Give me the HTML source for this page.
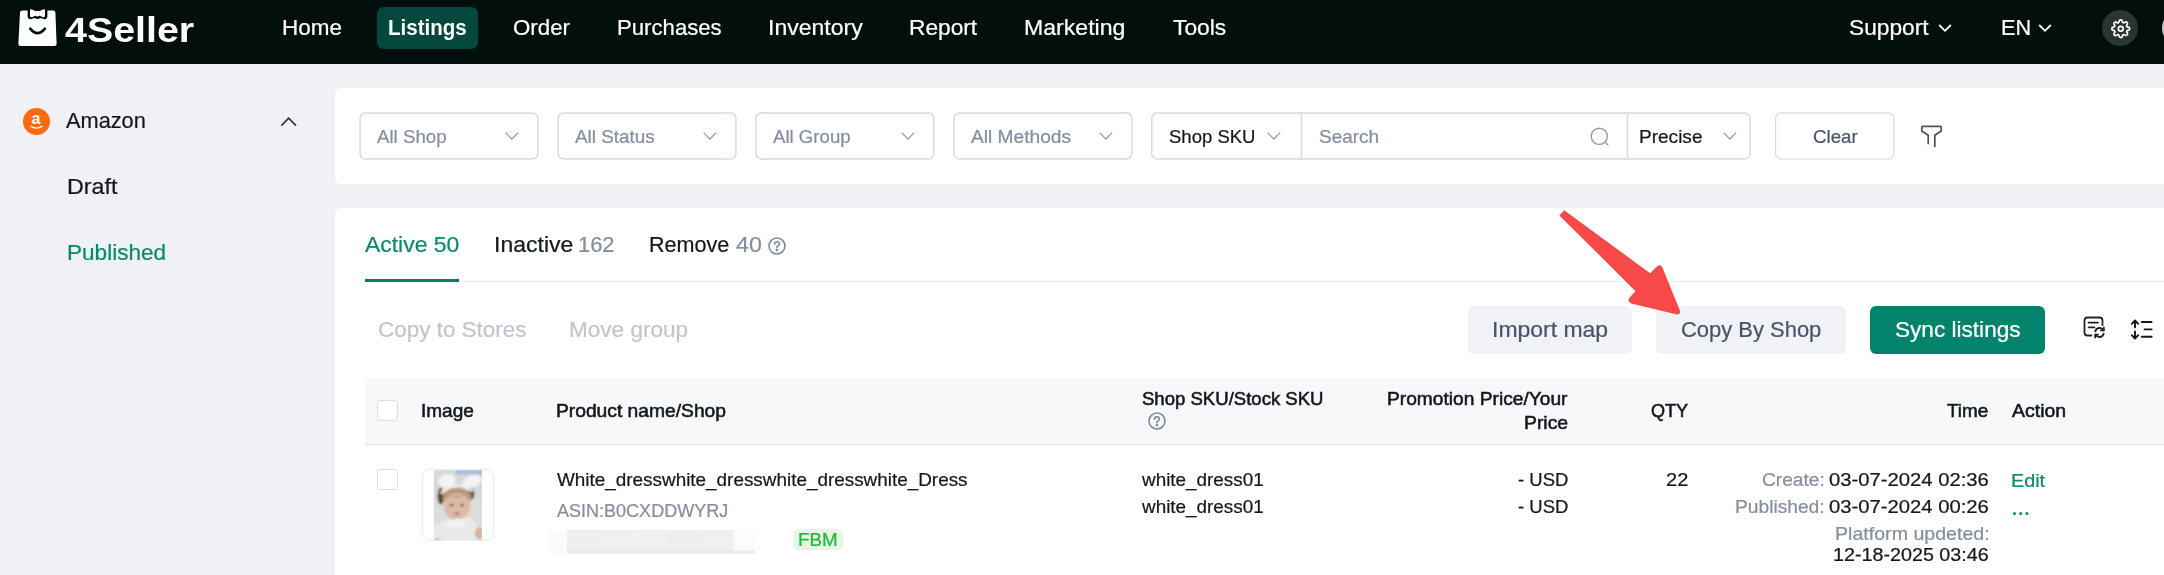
<!DOCTYPE html>
<html><head><meta charset="utf-8">
<style>
*{box-sizing:border-box;margin:0;padding:0}
html,body{width:2164px;height:575px;overflow:hidden;background:#f0f1f5;font-family:"Liberation Sans",sans-serif;}
.a{position:absolute;white-space:nowrap;line-height:1}
#hdr{position:absolute;left:0;top:0;width:2164px;height:64px;background:#020f0c}
.sel{position:absolute;top:112.2px;height:47.5px;border:1.7px solid #d6dae4;border-radius:6px;background:#fff}
.cb{position:absolute;width:20.5px;height:20.5px;border:1.5px solid #dcdfe6;border-radius:3px;background:#fff}
svg{position:absolute;overflow:visible}
</style></head><body>
<div id="w" style="position:absolute;left:0;top:0;width:2164px;height:575px;overflow:hidden">
<div id="hdr"></div>
<!-- logo -->
<svg style="left:18px;top:8px" width="40" height="40" viewBox="0 0 40 40">
<path d="M4.2 2.6 L35.2 2.6 Q37.3 2.6 37.4 4.6 L38.6 35.4 Q38.7 37.9 36.2 37.9 L2.8 37.9 Q0.3 37.9 0.4 35.4 L2 4.6 Q2.1 2.6 4.2 2.6 Z" fill="#fff"/>
<path d="M9.6 0 L29.4 0 L29.4 8.6 Q29.2 11.6 26.4 11.2 L22.4 10 Q19.5 12.2 16.6 10 L12.6 11.2 Q9.8 11.6 9.6 8.6 Z" fill="#020f0c"/>
<path d="M12 2.6 Q12 0.8 13.8 1.4 L18.2 3.2 Q19.5 2.4 20.8 3.2 L25.2 1.4 Q27 0.8 27 2.6 L27 7.6 Q27 9.6 25.2 9.2 L21.4 7.8 Q19.5 9.4 17.6 7.8 L13.8 9.2 Q12 9.6 12 7.6 Z" fill="#fff"/>
<path d="M12.2 20.7 Q19.5 29.6 26.9 20.7" fill="none" stroke="#020f0c" stroke-width="2.7" stroke-linecap="round"/>
</svg>
<div class="a" style="left:64.8px;top:12.2px;font-size:35px;font-weight:bold;color:#fff;transform:scaleX(1.125);transform-origin:0 0">4Seller</div>
<!-- nav pill -->
<div class="a" style="left:377px;top:7px;width:101px;height:42px;background:#04473c;border-radius:7px"></div>
<svg style="left:1938px;top:22px" width="14" height="12" viewBox="0 0 14 12"><path d="M1.2 3 L7 8.8 L12.8 3" fill="none" stroke="#fff" stroke-width="1.8"/></svg>
<svg style="left:2038px;top:22px" width="14" height="12" viewBox="0 0 14 12"><path d="M1.2 3 L7 8.8 L12.8 3" fill="none" stroke="#fff" stroke-width="1.8"/></svg>
<div class="a" style="left:2102px;top:10px;width:36px;height:36px;border-radius:50%;background:#2a3533"></div>
<div class="a" style="left:2161.8px;top:10px;width:36px;height:36px;border-radius:50%;background:#c9cccb"></div>
<svg style="left:2110.5px;top:18.5px" width="19.5" height="19.5" viewBox="0 0 24 24" fill="none" stroke="#fff" stroke-width="2.1" stroke-linejoin="round"><circle cx="12" cy="12" r="3"/><path d="M19.4 15a1.65 1.65 0 0 0 .33 1.82l.06.06a2 2 0 1 1-2.83 2.83l-.06-.06a1.65 1.65 0 0 0-1.82-.33 1.65 1.65 0 0 0-1 1.51V21a2 2 0 1 1-4 0v-.09A1.65 1.65 0 0 0 9 19.4a1.65 1.65 0 0 0-1.82.33l-.06.06a2 2 0 1 1-2.83-2.83l.06-.06a1.65 1.65 0 0 0 .33-1.82 1.65 1.65 0 0 0-1.51-1H3a2 2 0 1 1 0-4h.09A1.65 1.65 0 0 0 4.6 9a1.65 1.65 0 0 0-.33-1.82l-.06-.06a2 2 0 1 1 2.83-2.83l.06.06a1.65 1.65 0 0 0 1.82.33H9a1.65 1.65 0 0 0 1-1.51V3a2 2 0 1 1 4 0v.09a1.65 1.65 0 0 0 1 1.51 1.65 1.65 0 0 0 1.82-.33l.06-.06a2 2 0 1 1 2.83 2.83l-.06.06a1.65 1.65 0 0 0-.33 1.82V9a1.65 1.65 0 0 0 1.51 1H21a2 2 0 1 1 0 4h-.09a1.65 1.65 0 0 0-1.51 1z"/></svg>

<!-- sidebar -->
<div class="a" style="left:23px;top:108px;width:27px;height:27px;border-radius:50%;background:#ff6a0d"></div>
<div class="a" style="left:31.5px;top:110.5px;font-size:16px;font-weight:bold;color:#fff">a</div>
<svg style="left:29px;top:125px" width="15" height="6" viewBox="0 0 15 6"><path d="M1.5 1.2 Q7.5 5 13.5 1.2" fill="none" stroke="#fff" stroke-width="1.4"/></svg>
<svg style="left:280px;top:115px" width="18" height="14" viewBox="0 0 18 14"><path d="M1.3 10.6 L8.7 3.2 L16.1 10.6" fill="none" stroke="#2b3037" stroke-width="1.55"/></svg>

<!-- filter panel -->
<div class="a" style="left:335px;top:87.6px;width:1840px;height:96px;background:#fff;border-radius:6px"></div>
<svg style="left:0;top:0" width="2164" height="200" viewBox="0 0 2164 200" fill="#fff" stroke="#d7dae3" stroke-width="1.5"><rect x="360.05" y="113" width="177.90" height="45.9" rx="5.5"/><rect x="558.05" y="113" width="177.90" height="45.9" rx="5.5"/><rect x="755.95" y="113" width="177.90" height="45.9" rx="5.5"/><rect x="953.95" y="113" width="177.90" height="45.9" rx="5.5"/><rect x="1151.75" y="113" width="598.30" height="45.9" rx="5.5"/><path d="M1301.4 113 V159 M1627.4 113 V159" fill="none"/><rect x="1775.6" y="112.9" width="118.4" height="46.1" rx="5.5" stroke-width="1.2" stroke="#d6dae3"/></svg>
<svg style="left:505.2px;top:131.5px" width="14" height="8" viewBox="0 0 14 8"><path d="M0.6 0.6 L6.9 7 L13.2 0.6" fill="none" stroke="#959cab" stroke-width="1.25"/></svg>
<svg style="left:703.2px;top:131.5px" width="14" height="8" viewBox="0 0 14 8"><path d="M0.6 0.6 L6.9 7 L13.2 0.6" fill="none" stroke="#959cab" stroke-width="1.25"/></svg>
<svg style="left:901.1px;top:131.5px" width="14" height="8" viewBox="0 0 14 8"><path d="M0.6 0.6 L6.9 7 L13.2 0.6" fill="none" stroke="#959cab" stroke-width="1.25"/></svg>
<svg style="left:1099.1px;top:131.5px" width="14" height="8" viewBox="0 0 14 8"><path d="M0.6 0.6 L6.9 7 L13.2 0.6" fill="none" stroke="#959cab" stroke-width="1.25"/></svg>
<svg style="left:1267.2px;top:131.5px" width="14" height="8" viewBox="0 0 14 8"><path d="M0.6 0.6 L6.9 7 L13.2 0.6" fill="none" stroke="#959cab" stroke-width="1.25"/></svg>
<svg style="left:1723.2px;top:131.5px" width="14" height="8" viewBox="0 0 14 8"><path d="M0.6 0.6 L6.9 7 L13.2 0.6" fill="none" stroke="#959cab" stroke-width="1.25"/></svg>

<svg style="left:1589.5px;top:126.5px" width="20" height="20" viewBox="0 0 20 20" fill="none" stroke="#9399a6" stroke-width="1.35"><circle cx="9.3" cy="9.3" r="8.1"/><path d="M15.3 15.3 L17.9 17.9" stroke-linecap="round"/></svg>
<svg style="left:1919.5px;top:125px" width="23" height="23" viewBox="0 0 23 23" fill="none" stroke="#465063" stroke-width="1.7" stroke-linejoin="round" stroke-linecap="round"><path d="M8.2 18.4 V10.2 L1.8 6 V2.3 Q1.8 1.3 2.8 1.3 H20.2 Q21.2 1.3 21.2 2.3 V6 L14.8 10.2 V21.4"/></svg>

<!-- main panel -->
<div class="a" style="left:335px;top:207.6px;width:1840px;height:400px;background:#fff;border-radius:6px"></div>
<div class="a" style="left:365px;top:281px;width:1800px;height:1px;background:#ebecf3"></div>
<div class="a" style="left:365.2px;top:279px;width:93.8px;height:3px;background:#037f66"></div>
<svg style="left:768.2px;top:236.6px" width="18" height="18" viewBox="0 0 18 18" fill="none" stroke="#7f899b" stroke-width="1.6"><circle cx="9" cy="9" r="8"/><path d="M6.6 7.2 Q6.6 4.8 9 4.8 Q11.4 4.8 11.4 7 Q11.4 8.4 9 9.6 V10.8" stroke-linecap="round"/><circle cx="9" cy="13.1" r="0.55" fill="#7f899b"/></svg>
<div class="a" style="left:1467.8px;top:306px;width:164.2px;height:47.8px;background:#f1f2f5;border-radius:6px"></div>
<div class="a" style="left:1655.8px;top:306px;width:190px;height:47.8px;background:#f1f2f5;border-radius:6px"></div>
<div class="a" style="left:1869.9px;top:306px;width:175px;height:47.8px;background:#04836c;border-radius:6px"></div>
<!-- toolbar icons -->
<svg style="left:2082.6px;top:316.4px" width="23" height="23" viewBox="0 0 23 23" fill="none" stroke="#1f2329" stroke-width="1.8" stroke-linecap="round" stroke-linejoin="round"><path d="M8.4 19.5 H4.5 Q1.5 19.5 1.5 16.5 V4.5 Q1.5 1.5 4.5 1.5 H16.5 Q19.5 1.5 19.5 4.5 V9"/><path d="M5.6 6.6 H15 M5.6 11.4 H11.4"/><path d="M12.3 15.3 A4.4 4.4 0 0 1 20.4 14.2 M20.7 17.6 A4.4 4.4 0 0 1 12.6 18.8" stroke-width="1.9"/><path d="M20.9 11.4 V14.5 H17.9 M12.1 21.6 V18.5 H15.1" stroke-width="1.7"/></svg>
<svg style="left:2130px;top:319px" width="23" height="21" viewBox="0 0 23 21" fill="none" stroke="#14171c" stroke-width="1.9" stroke-linecap="round" stroke-linejoin="round"><path d="M5 1.6 V8.4 M5 12.4 V19.4 M1.8 4.8 L5 1.4 L8.2 4.8 M1.8 16.2 L5 19.6 L8.2 16.2"/><path d="M11.8 3 H21.6 M14.6 10.4 H21.6 M11.8 17.7 H21.6"/></svg>

<!-- table -->
<div class="a" style="left:365px;top:377.8px;width:1800px;height:67px;background:#f7f8fa;border-bottom:1.4px solid #e6e8ee"></div>
<div class="cb" style="left:377.2px;top:400.2px"></div>
<div class="cb" style="left:377.2px;top:469.2px"></div>
<svg style="left:1148px;top:412.3px" width="18" height="18" viewBox="0 0 18 18" fill="none" stroke="#7f899b" stroke-width="1.6"><circle cx="9" cy="9" r="8"/><path d="M6.6 7.2 Q6.6 4.8 9 4.8 Q11.4 4.8 11.4 7 Q11.4 8.4 9 9.6 V10.8" stroke-linecap="round"/><circle cx="9" cy="13.1" r="0.55" fill="#7f899b"/></svg>
<!-- thumbnail -->
<div class="a" style="left:422.2px;top:469.2px;width:71.4px;height:71.4px;border:1.2px solid #e9ecf5;border-radius:7px;background:#fff;overflow:hidden">
<svg style="left:10.6px;top:-0.6px" width="48" height="70.4" viewBox="0 0 48 70">
<defs><filter id="bl" x="-5%" y="-5%" width="110%" height="110%"><feGaussianBlur stdDeviation="1.0"/></filter><clipPath id="cp"><rect x="0" y="0" width="48" height="70"/></clipPath></defs>
<g clip-path="url(#cp)"><g filter="url(#bl)">
<rect x="-2" y="-2" width="52" height="74" fill="#d7d9d8"/>
<rect x="-2" y="30" width="52" height="42" fill="#dddddb"/>
<rect x="22" y="-2" width="28" height="6.2" fill="#a9bcd8"/>
<ellipse cx="12.8" cy="10.6" rx="8.8" ry="6.6" transform="rotate(-15 12.8 10.6)" fill="#f4f4f4"/>
<ellipse cx="37.6" cy="11.8" rx="10.2" ry="6.2" transform="rotate(-26 37.6 11.8)" fill="#f4f4f4"/>
<ellipse cx="6.8" cy="26" rx="3.2" ry="8.4" fill="#55443a"/>
<ellipse cx="37.3" cy="23.2" rx="3.1" ry="6" fill="#55443a"/>
<ellipse cx="23" cy="27" rx="14.4" ry="9.6" fill="#b99878"/>
<path d="M7 23 Q22 9 39 21" fill="none" stroke="#efefef" stroke-width="2.8"/>
<ellipse cx="23" cy="36.4" rx="13.2" ry="13.4" fill="#dcbca8"/>
<path d="M10 31 Q22 19 36 31 Q30 25.5 23 27.5 Q15 25.5 10 31 Z" fill="#c0a080"/>
<ellipse cx="17.6" cy="35" rx="1.9" ry="1.4" fill="#6a5a66"/>
<ellipse cx="28" cy="35" rx="1.9" ry="1.4" fill="#6a5a66"/>
<ellipse cx="23" cy="43.4" rx="2.8" ry="1.2" fill="#a8615c"/>
<ellipse cx="23" cy="48.8" rx="7" ry="2" fill="#c9a791"/>
<path d="M-2 72 L-2 60 Q2 51 12 50 L34 47 Q43 49 44 60 L46 72 Z" fill="#e9e9e8"/>
<ellipse cx="22" cy="53" rx="10.5" ry="4.6" fill="#f3f3f1"/>
<ellipse cx="45" cy="63" rx="4" ry="6" fill="#d8b29b"/>
<rect x="0" y="68.5" width="6" height="2" fill="#d9a070"/>
</g></g></svg>
</div>
<!-- blur block -->
<div class="a" style="left:549px;top:530px;width:18px;height:23.7px;background:#fbfbfb"></div>
<div class="a" style="left:567px;top:530px;width:166.7px;height:23.7px;background:linear-gradient(90deg,#eeeff0 0,#eeeff0 20%,#eff0f0 20%,#eff0f0 40%,#f0f1f2 40%,#f0f1f2 60%,#edeeef 60%,#edeeef 80%,#f0f0f0 80%)"></div>
<div class="a" style="left:567px;top:549.2px;width:166.7px;height:4.5px;background:#eaebec"></div>
<div class="a" style="left:733.7px;top:530px;width:21.3px;height:23.7px;background:#fcfcfc"></div>
<div class="a" style="left:733.7px;top:549.8px;width:21.3px;height:3.9px;background:#eeeeef"></div>
<!-- FBM tag -->
<div class="a" style="left:793.2px;top:529.2px;width:49.6px;height:20.4px;background:#e5f8e7;border-radius:5.5px"></div>
<!-- dots -->
<div class="a" style="left:2013.3px;top:512.3px;width:3px;height:3px;border-radius:50%;background:#0a8a6f;box-shadow:6.2px 0 0 #0a8a6f,12.4px 0 0 #0a8a6f"></div>
<div class="a" style="left:281.80px;top:18.0px;font-size:21.4px;color:#fff;-webkit-text-stroke:0.22px;transform:scaleX(1.0496);transform-origin:0 0;">Home</div>
<div class="a" style="left:387.87px;top:18.0px;font-size:21.4px;color:#fff;font-weight:bold;transform:scaleX(0.9591);transform-origin:0 0;">Listings</div>
<div class="a" style="left:513.02px;top:18.0px;font-size:21.4px;color:#fff;-webkit-text-stroke:0.22px;transform:scaleX(1.0417);transform-origin:0 0;">Order</div>
<div class="a" style="left:617.10px;top:18.0px;font-size:21.4px;color:#fff;-webkit-text-stroke:0.22px;transform:scaleX(1.0359);transform-origin:0 0;">Purchases</div>
<div class="a" style="left:768.27px;top:18.0px;font-size:21.4px;color:#fff;-webkit-text-stroke:0.22px;transform:scaleX(1.0770);transform-origin:0 0;">Inventory</div>
<div class="a" style="left:909.41px;top:18.0px;font-size:21.4px;color:#fff;-webkit-text-stroke:0.22px;transform:scaleX(1.0609);transform-origin:0 0;">Report</div>
<div class="a" style="left:1024.24px;top:18.0px;font-size:21.4px;color:#fff;-webkit-text-stroke:0.22px;transform:scaleX(1.0794);transform-origin:0 0;">Marketing</div>
<div class="a" style="left:1172.82px;top:18.0px;font-size:21.4px;color:#fff;-webkit-text-stroke:0.22px;transform:scaleX(1.0669);transform-origin:0 0;">Tools</div>
<div class="a" style="left:1849.47px;top:18.0px;font-size:21.4px;color:#fff;-webkit-text-stroke:0.22px;transform:scaleX(1.0619);transform-origin:0 0;">Support</div>
<div class="a" style="left:2001.06px;top:18.0px;font-size:21.4px;color:#fff;-webkit-text-stroke:0.22px;transform:scaleX(1.0143);transform-origin:0 0;">EN</div>
<div class="a" style="left:65.81px;top:111.0px;font-size:21.4px;color:#14181d;-webkit-text-stroke:0.22px;transform:scaleX(1.0169);transform-origin:0 0;">Amazon</div>
<div class="a" style="left:66.63px;top:177.0px;font-size:21.4px;color:#14181d;-webkit-text-stroke:0.22px;transform:scaleX(1.0887);transform-origin:0 0;">Draft</div>
<div class="a" style="left:66.88px;top:243.0px;font-size:21.4px;color:#0a8a6f;-webkit-text-stroke:0.22px;transform:scaleX(1.0552);transform-origin:0 0;">Published</div>
<div class="a" style="left:377.39px;top:128.0px;font-size:18.2px;color:#858e9f;-webkit-text-stroke:0.22px;transform:scaleX(1.0263);transform-origin:0 0;">All Shop</div>
<div class="a" style="left:575.14px;top:128.0px;font-size:18.2px;color:#858e9f;-webkit-text-stroke:0.22px;transform:scaleX(1.0384);transform-origin:0 0;">All Status</div>
<div class="a" style="left:773.01px;top:128.0px;font-size:18.2px;color:#858e9f;-webkit-text-stroke:0.22px;transform:scaleX(1.0239);transform-origin:0 0;">All Group</div>
<div class="a" style="left:971.40px;top:128.0px;font-size:18.2px;color:#858e9f;-webkit-text-stroke:0.22px;transform:scaleX(1.0534);transform-origin:0 0;">All Methods</div>
<div class="a" style="left:1168.84px;top:128.0px;font-size:18.2px;color:#14181d;-webkit-text-stroke:0.22px;transform:scaleX(1.0185);transform-origin:0 0;">Shop SKU</div>
<div class="a" style="left:1319.05px;top:128.0px;font-size:18.2px;color:#858e9f;-webkit-text-stroke:0.22px;transform:scaleX(1.0427);transform-origin:0 0;">Search</div>
<div class="a" style="left:1639.30px;top:128.0px;font-size:18.2px;color:#14181d;-webkit-text-stroke:0.22px;transform:scaleX(1.0464);transform-origin:0 0;">Precise</div>
<div class="a" style="left:1812.56px;top:128.0px;font-size:18.2px;color:#4a5468;-webkit-text-stroke:0.22px;transform:scaleX(1.0281);transform-origin:0 0;">Clear</div>
<div class="a" style="left:365.16px;top:235.0px;font-size:21.4px;color:#0a8a6f;-webkit-text-stroke:0.22px;transform:scaleX(1.0712);transform-origin:0 0;">Active 50</div>
<div class="a" style="left:494.45px;top:235.0px;font-size:21.4px;color:#14181d;-webkit-text-stroke:0.22px;transform:scaleX(1.0755);transform-origin:0 0;">Inactive</div>
<div class="a" style="left:577.78px;top:235.0px;font-size:21.4px;color:#858e9f;-webkit-text-stroke:0.22px;transform:scaleX(1.0236);transform-origin:0 0;">162</div>
<div class="a" style="left:649.10px;top:235.0px;font-size:21.4px;color:#14181d;-webkit-text-stroke:0.22px;transform:scaleX(1.0074);transform-origin:0 0;">Remove</div>
<div class="a" style="left:735.80px;top:235.0px;font-size:21.4px;color:#858e9f;-webkit-text-stroke:0.22px;transform:scaleX(1.0864);transform-origin:0 0;">40</div>
<div class="a" style="left:377.87px;top:320.0px;font-size:21.4px;color:#c0c5d0;-webkit-text-stroke:0.22px;transform:scaleX(1.0495);transform-origin:0 0;">Copy to Stores</div>
<div class="a" style="left:568.88px;top:320.0px;font-size:21.4px;color:#c0c5d0;-webkit-text-stroke:0.22px;transform:scaleX(1.0546);transform-origin:0 0;">Move group</div>
<div class="a" style="left:1492.28px;top:320.0px;font-size:21.4px;color:#4a5468;-webkit-text-stroke:0.22px;transform:scaleX(1.0733);transform-origin:0 0;">Import map</div>
<div class="a" style="left:1680.85px;top:320.0px;font-size:21.4px;color:#4a5468;-webkit-text-stroke:0.22px;transform:scaleX(1.0261);transform-origin:0 0;">Copy By Shop</div>
<div class="a" style="left:1894.81px;top:320.0px;font-size:21.4px;color:#fff;-webkit-text-stroke:0.22px;transform:scaleX(1.0563);transform-origin:0 0;">Sync listings</div>
<div class="a" style="left:421.20px;top:402.0px;font-size:18.2px;color:#14181d;-webkit-text-stroke:0.55px;transform:scaleX(1.0435);transform-origin:0 0;">Image</div>
<div class="a" style="left:556.42px;top:402.0px;font-size:18.2px;color:#14181d;-webkit-text-stroke:0.55px;transform:scaleX(1.0573);transform-origin:0 0;">Product name/Shop</div>
<div class="a" style="left:1141.65px;top:390.0px;font-size:18.2px;color:#14181d;-webkit-text-stroke:0.55px;transform:scaleX(1.0201);transform-origin:0 0;">Shop SKU/Stock SKU</div>
<div class="a" style="left:1387.42px;top:390.0px;font-size:18.2px;color:#14181d;-webkit-text-stroke:0.55px;transform:scaleX(1.0545);transform-origin:0 0;">Promotion Price/Your</div>
<div class="a" style="left:1524.42px;top:414.0px;font-size:18.2px;color:#14181d;-webkit-text-stroke:0.55px;transform:scaleX(1.0629);transform-origin:0 0;">Price</div>
<div class="a" style="left:1650.83px;top:402.0px;font-size:18.2px;color:#14181d;-webkit-text-stroke:0.55px;transform:scaleX(0.9944);transform-origin:0 0;">QTY</div>
<div class="a" style="left:1946.76px;top:402.0px;font-size:18.2px;color:#14181d;-webkit-text-stroke:0.55px;transform:scaleX(1.0381);transform-origin:0 0;">Time</div>
<div class="a" style="left:2012.40px;top:402.0px;font-size:18.2px;color:#14181d;-webkit-text-stroke:0.55px;transform:scaleX(1.0709);transform-origin:0 0;">Action</div>
<div class="a" style="left:557.19px;top:471.0px;font-size:18.2px;color:#14181d;-webkit-text-stroke:0.22px;transform:scaleX(1.0387);transform-origin:0 0;">White_dresswhite_dresswhite_dresswhite_Dress</div>
<div class="a" style="left:557.14px;top:502.0px;font-size:18.2px;color:#858e9f;-webkit-text-stroke:0.22px;transform:scaleX(0.9907);transform-origin:0 0;">ASIN:B0CXDDWYRJ</div>
<div class="a" style="left:798.44px;top:531.0px;font-size:18.2px;color:#1fb834;-webkit-text-stroke:0.22px;transform:scaleX(1.0320);transform-origin:0 0;">FBM</div>
<div class="a" style="left:1142.25px;top:471.0px;font-size:18.2px;color:#14181d;-webkit-text-stroke:0.22px;transform:scaleX(1.0377);transform-origin:0 0;">white_dress01</div>
<div class="a" style="left:1142.25px;top:498.0px;font-size:18.2px;color:#14181d;-webkit-text-stroke:0.22px;transform:scaleX(1.0377);transform-origin:0 0;">white_dress01</div>
<div class="a" style="left:1518.07px;top:471.0px;font-size:18.2px;color:#14181d;-webkit-text-stroke:0.22px;transform:scaleX(1.0158);transform-origin:0 0;">- USD</div>
<div class="a" style="left:1518.07px;top:498.0px;font-size:18.2px;color:#14181d;-webkit-text-stroke:0.22px;transform:scaleX(1.0158);transform-origin:0 0;">- USD</div>
<div class="a" style="left:1666.34px;top:471.0px;font-size:18.2px;color:#14181d;-webkit-text-stroke:0.22px;transform:scaleX(1.1006);transform-origin:0 0;">22</div>
<div class="a" style="left:1828.82px;top:471.0px;font-size:18.2px;color:#14181d;-webkit-text-stroke:0.22px;transform:scaleX(1.1129);transform-origin:0 0;">03-07-2024 02:36</div>
<div class="a" style="left:1762.16px;top:471.0px;font-size:18.2px;color:#858e9f;-webkit-text-stroke:0.22px;transform:scaleX(1.0524);transform-origin:0 0;">Create:</div>
<div class="a" style="left:1828.82px;top:498.0px;font-size:18.2px;color:#14181d;-webkit-text-stroke:0.22px;transform:scaleX(1.1129);transform-origin:0 0;">03-07-2024 00:26</div>
<div class="a" style="left:1735.26px;top:498.0px;font-size:18.2px;color:#858e9f;-webkit-text-stroke:0.22px;transform:scaleX(1.0546);transform-origin:0 0;">Published:</div>
<div class="a" style="left:1835.12px;top:525.0px;font-size:18.2px;color:#858e9f;-webkit-text-stroke:0.22px;transform:scaleX(1.0774);transform-origin:0 0;">Platform updeted:</div>
<div class="a" style="left:1832.80px;top:546.0px;font-size:18.2px;color:#14181d;-webkit-text-stroke:0.22px;transform:scaleX(1.0843);transform-origin:0 0;">12-18-2025 03:46</div>
<div class="a" style="left:2011.12px;top:472.0px;font-size:18.2px;color:#0a8a6f;-webkit-text-stroke:0.22px;transform:scaleX(1.0856);transform-origin:0 0;">Edit</div>
<!-- arrow -->
<svg style="left:0;top:0" width="2164" height="575" viewBox="0 0 2164 575"><path d="M1564.2 210.2 L1650.1 273.2 L1657 266.6 Q1660.5 263.6 1662.4 267.6 L1679.7 310 Q1681.2 315 1676 314.3 L1632.2 303.7 Q1626.2 301.6 1630 297 L1635.5 291.2 L1559.4 215.4 Z" fill="#f74a48"/></svg>
</div>
</body></html>
